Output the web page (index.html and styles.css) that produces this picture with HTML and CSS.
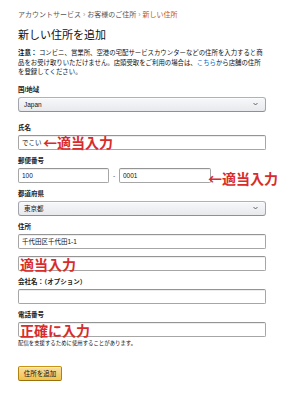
FILE: index.html
```html
<!DOCTYPE html>
<html lang="ja">
<head>
  <meta charset="UTF-8">
  <meta name="viewport" content="width=device-width, initial-scale=1.0">
  <title>新しい住所を追加</title>
  <link rel="stylesheet" href="styles.css">
</head>
<body>

  <div class="page">
    <div class="crumbs">アカウントサービス <span class="sep">›</span> お客様のご住所 <span class="sep">›</span> <span class="current">新しい住所</span></div>
    <h1 class="title">新しい住所を追加</h1>
    <p class="note"><b>注意：</b> コンビニ、営業所、空港の宅配サービスカウンターなどの住所を入力すると商<br>品をお受け取りいただけません。店頭受取をご利用の場合は、<a href="#">こちら</a>から店舗の住所<br>を登録してください。</p>

    <div class="field field-wide">
      <div class="label">国/地域</div>
      <div class="select">
        <span>Japan</span>
        <svg width="5" height="4" viewBox="0 0 5 4"><path d="M0.5 1 L2.5 3 L4.5 1" fill="none" stroke="#555" stroke-width="0.9"/></svg>
      </div>
    </div>

    <div class="field">
      <div class="label">氏名</div>
      <div class="box">
        <input class="input" type="text" value="でこい">
        <span class="mark mark-name">←適当入力</span>
      </div>
    </div>

    <div class="field">
      <div class="label">郵便番号</div>
      <div class="postal">
        <input class="input zip1" type="text" value="100">
        <span class="dash">-</span>
        <input class="input zip2" type="text" value="0001">
        <span class="mark mark-zip">←適当入力</span>
      </div>
    </div>

    <div class="field">
      <div class="label">都道府県</div>
      <div class="select">
        <span>東京都</span>
        <svg width="5" height="4" viewBox="0 0 5 4"><path d="M0.5 1 L2.5 3 L4.5 1" fill="none" stroke="#555" stroke-width="0.9"/></svg>
      </div>
    </div>

    <div class="field">
      <div class="label">住所</div>
      <input class="input line1" type="text" value="千代田区千代田1-1">
      <div class="box">
        <input class="input" type="text" value="">
        <span class="mark mark-line">適当入力</span>
      </div>
    </div>

    <div class="field">
      <div class="label">会社名：（オプション）</div>
      <input class="input" type="text" value="">
    </div>

    <div class="field">
      <div class="label">電話番号</div>
      <div class="box">
        <input class="input" type="text" value="">
        <span class="mark mark-line">正確に入力</span>
      </div>
      <div class="hint">配信を支援するために使用することがあります。</div>
    </div>

    <button class="btn">住所を追加</button>
  </div>

</body>
</html>
```

FILE: styles.css
```css
body {
  margin: 0;
  background: #fff;
  color: #111;
  font-family: "Liberation Sans", "Noto Sans CJK JP", sans-serif;
}
.page {
  padding: 10px 19px 0 18px;
}
.crumbs {
  font-size: 7px;
  line-height: 10px;
  color: #555;
}
.crumbs .sep {
  color: #999;
}
.crumbs .current {
  color: #c45500;
}
.title {
  margin: 8px 0 6px;
  font-size: 11px;
  line-height: 14px;
  font-weight: normal;
}
.note {
  margin: 0 0 9px;
  font-size: 6.4px;
  line-height: 9.5px;
  white-space: nowrap;
}
.note a {
  color: #0066c0;
  text-decoration: none;
}
.field {
  margin-bottom: 7px;
}
.field-wide {
  margin-bottom: 12px;
}
.label {
  margin-bottom: 3px;
  font-size: 6.5px;
  line-height: 8px;
  font-weight: bold;
  color: #222;
}
.select {
  display: flex;
  align-items: center;
  justify-content: space-between;
  box-sizing: border-box;
  height: 15px;
  padding: 0 7px 0 5px;
  border: 1px solid #adb1b8;
  border-color: #adb1b8 #a2a6ac #8d9096;
  border-radius: 3px;
  background: linear-gradient(#f7f8fa, #e7e9ec);
  box-shadow: 0 1px 0 rgba(255, 255, 255, .6) inset;
  font-size: 6.5px;
  color: #111;
}
.input {
  display: block;
  box-sizing: border-box;
  width: 100%;
  height: 15px;
  margin: 0;
  padding: 0 3px;
  border: 1px solid #a6a6a6;
  border-top-color: #949494;
  border-radius: 2px;
  box-shadow: inset 0 1px 0 rgba(0, 0, 0, .07);
  background: #fff;
  font-family: "Liberation Sans", "Noto Sans CJK JP", sans-serif;
  font-size: 6.5px;
  color: #111;
}
.line1 {
  margin-bottom: 7px;
}
.box {
  position: relative;
}
.postal {
  position: relative;
  display: flex;
  align-items: center;
}
.zip1 {
  width: 91px;
}
.zip2 {
  width: 92px;
}
.dash {
  width: 10px;
  text-align: center;
  font-size: 6.5px;
  color: #555;
}
.mark {
  position: absolute;
  font-family: "Noto Sans CJK JP", sans-serif;
  font-size: 14px;
  line-height: 15px;
  font-weight: bold;
  color: #d82c2c;
  white-space: nowrap;
}
.mark-name {
  left: 25px;
  top: 0;
}
.mark-zip {
  left: 190px;
  top: 3px;
}
.mark-line {
  left: 2px;
  top: 1px;
}
.hint {
  margin-top: 3px;
  font-size: 5.4px;
  line-height: 6px;
  color: #111;
}
.btn {
  display: block;
  box-sizing: border-box;
  width: 44px;
  height: 15px;
  margin-top: 20px;
  padding: 0;
  border: 1px solid #a88734;
  border-color: #c89411 #b0820f #99710d;
  border-radius: 2px;
  background: linear-gradient(#f7dfa5, #f0c14b);
  box-shadow: 0 1px 0 rgba(255, 255, 255, .4) inset;
  font-family: "Liberation Sans", "Noto Sans CJK JP", sans-serif;
  font-size: 6.5px;
  color: #111;
  cursor: pointer;
}
```
